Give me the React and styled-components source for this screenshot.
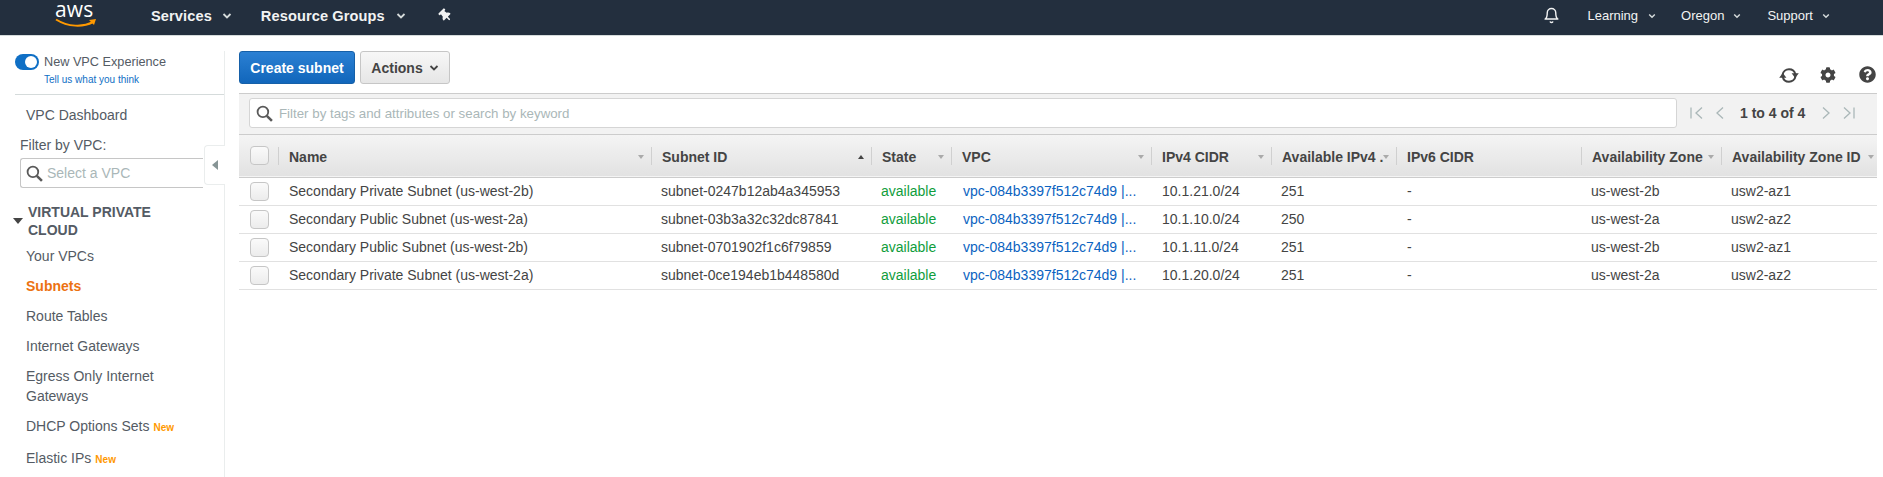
import React from 'react'
import styled, { createGlobalStyle } from 'styled-components'
import { FaCog, FaQuestionCircle, FaThumbtack } from 'react-icons/fa'
import { FiBell } from 'react-icons/fi'

const Global = createGlobalStyle`
  html, body { margin: 0; padding: 0; height: 100%; overflow: hidden; background: #fff; }
  body { font-family: "Liberation Sans", Arial, sans-serif; color: #444; }
  #root { height: 100%; }
`

const Page = styled.div`
  height: 477px;
  display: flex;
  flex-direction: column;
  overflow: hidden;
`

const TopNav = styled.header`
  flex: none;
  height: 31px;
  padding-bottom: 4px;
  background: #232f3e;
  border-bottom: 1px solid #d5dbdb;
  display: flex;
  align-items: center;
  color: #fff;
`

const LogoBox = styled.div`
  width: 151px;
  flex: none;
  padding-left: 55px;
  box-sizing: border-box;
  align-self: flex-start;
`

const LogoText = styled.span`
  display: block;
  font-family: "Open Sans", sans-serif;
  font-size: 21px;
  line-height: 18px;
  letter-spacing: 0.2px;
`

const Smile = styled.svg`
  display: block;
  width: 42px;
  height: 11px;
`

const NavItem = styled.span`
  font-size: ${p => (p.$small ? 13 : 14.6)}px;
  font-weight: ${p => (p.$small ? 400 : 700)};
  letter-spacing: ${p => (p.$small ? 0 : 0.1)}px;
  margin-right: ${p => p.$gap}px;
  color: #f2f3f3;
  display: inline-flex;
  align-items: center;
`

const Pin = styled(FaThumbtack)`
  font-size: 13px;
  transform: rotate(-45deg);
  color: #f2f3f3;
`

const Spacer = styled.div`
  flex: 1;
`

const Body = styled.div`
  flex: 1;
  display: flex;
  padding-top: 15px;
  min-height: 0;
`

const Sidebar = styled.aside`
  width: 224px;
  flex: none;
  border-right: 1px solid #eaeded;
  position: relative;
`

const ToggleRow = styled.div`
  margin-left: 15px;
  height: 43px;
  border-bottom: 1px solid #d5dbdb;
  display: flex;
  gap: 5px;
`

const Toggle = styled.span`
  width: 24px;
  height: 16px;
  margin-top: 3px;
  border-radius: 8px;
  background: #0f6fc5;
  flex: none;
  display: flex;
  justify-content: flex-end;
  align-items: center;
  padding-right: 2px;
  box-sizing: border-box;

  &::after {
    content: '';
    width: 12px;
    height: 12px;
    border-radius: 50%;
    background: #fff;
  }
`

const ToggleLabel = styled.div`
  font-size: 12.7px;
  line-height: 16px;
  color: #545b64;
  margin-top: 3px;
`

const Feedback = styled.div`
  font-size: 10px;
  line-height: 12px;
  margin-top: 4px;
  color: #0f6fc5;
`

const SideLink = styled.div`
  font-size: 14px;
  line-height: 20px;
  color: ${p => (p.$active ? '#ec7211' : '#545b64')};
  font-weight: ${p => (p.$active ? 700 : 400)};
  margin: ${p => p.$mt ?? 10}px 20px 0 26px;
`

const NewTag = styled.span`
  font-size: 10px;
  font-weight: 700;
  color: #ff9900;
  margin-left: 4px;
`

const FilterLabel = styled.div`
  font-size: 14px;
  line-height: 20px;
  margin: 10px 0 3px 20px;
  color: #545b64;
`

const VpcSelect = styled.div`
  margin-left: 20px;
  width: 183px;
  height: 30px;
  box-sizing: border-box;
  border: 1px solid #c6c6c6;
  border-right: 0;
  border-radius: 3px 0 0 3px;
  display: flex;
  align-items: center;
  gap: 4px;
  padding-left: 5px;
  font-size: 14px;
  color: #aab7b8;
`

const Collapse = styled.div`
  position: absolute;
  left: 204px;
  top: 94px;
  width: 21px;
  height: 40px;
  box-sizing: border-box;
  background: #fff;
  border: 1px solid #eaeded;
  border-right: 0;
  border-radius: 4px 0 0 4px;
  display: flex;
  align-items: center;
  justify-content: center;
`

const CollapseArrow = styled.span`
  border-style: solid;
  border-width: 5.5px 6px 5.5px 0;
  border-color: transparent #879596 transparent transparent;
`

const SectionHead = styled.div`
  display: flex;
  align-items: center;
  gap: 5px;
  margin: 15px 20px 0 13px;
  font-size: 14px;
  line-height: 18px;
  font-weight: 700;
  color: #545b64;
`

const SectionCaret = styled.span`
  flex: none;
  border-style: solid;
  border-width: 6px 5px 0 5px;
  border-color: #444 transparent transparent transparent;
`

const Main = styled.main`
  flex: 1;
  min-width: 0;
  padding: 0 6px 0 14px;
`

const ActionBar = styled.div`
  display: flex;
  align-items: flex-start;
  gap: 5px;
  height: 42px;
`

const Button = styled.button`
  height: 33px;
  box-sizing: border-box;
  padding: 0;
  width: ${p => p.$w}px;
  border-radius: 3px;
  font-family: inherit;
  font-size: 14px;
  font-weight: 700;
  display: inline-flex;
  align-items: center;
  justify-content: center;
  gap: 6px;
  border: 1px solid ${p => (p.$primary ? '#1660a8' : '#c6c6c6')};
  color: ${p => (p.$primary ? '#fff' : '#444')};
  background: ${p => (p.$primary
    ? 'linear-gradient(#2b80d3, #1166bb)'
    : 'linear-gradient(#f7f7f7, #e6e6e6)')};
`

const ToolIcons = styled.div`
  margin-left: auto;
  display: flex;
  align-items: center;
  padding-top: 15px;
  color: #444;
  font-size: 17px;
`

const RefreshIcon = styled.svg`
  width: 20px;
  height: 15px;
  margin: 2px 21px 0 0;
`

const GearIcon = styled(FaCog)`
  font-size: 16px;
  margin-right: 23px;
`

const Help = styled(FaQuestionCircle)`
  font-size: 17px;
  margin-right: 1px;
`

const FilterBar = styled.div`
  height: 42px;
  box-sizing: border-box;
  background: #f2f2f2;
  border-top: 1px solid #ccc;
  border-bottom: 1px solid #ccc;
  padding: 4px 0 0 10px;
  display: flex;
`

const SearchBox = styled.div`
  width: 1428px;
  height: 30px;
  box-sizing: border-box;
  background: #fff;
  border: 1px solid #d5d5d5;
  border-radius: 3px;
  display: flex;
  align-items: center;
  gap: 6px;
  padding-left: 6px;
  font-size: 13.3px;
  color: #aab7b8;
`

const Pager = styled.div`
  display: flex;
  align-items: center;
  height: 30px;
  padding-left: 12px;
  font-size: 14px;
  font-weight: 700;
  color: #444;
`

const PageText = styled.span`
  margin: 0 14px 0 13px;
`

const PageIcon = styled.svg`
  width: 14px;
  height: 14px;
  flex: none;
  margin-right: ${p => p.$mr ?? 0}px;
  fill: none;
  stroke: #aab7b8;
  stroke-width: 1.3;
`

const Table = styled.table`
  width: 1638px;
  table-layout: fixed;
  border-collapse: collapse;
  font-size: 14px;
`

const HeadRow = styled.tr`
  height: 42px;
  background: linear-gradient(#f4f4f4, #e2e2e2);
  border-bottom: 1px solid #ccc;
`

const Th = styled.th`
  position: relative;
  padding: ${p => (p.$first ? 0 : '2px 0 0 11px')};
  text-align: left;
  font-size: 14px;
  font-weight: 700;
  color: #444;
  white-space: nowrap;
  overflow: hidden;

  &::before {
    content: '';
    position: absolute;
    left: 0;
    top: 12px;
    bottom: 12px;
    width: 1px;
    background: #d0d0d0;
    display: ${p => (p.$first ? 'none' : 'block')};
  }
`

const SortMark = styled.span`
  position: absolute;
  right: ${p => p.$right ?? 7}px;
  top: 20px;
  border-style: solid;
  border-width: ${p => (p.$up ? '0 3.5px 4px 3.5px' : '4px 3.5px 0 3.5px')};
  border-color: ${p => (p.$up
    ? 'transparent transparent #444 transparent'
    : '#aaa transparent transparent transparent')};
`

const Row = styled.tr`
  height: 28px;
  border-bottom: 1px solid #e1e1e1;
`

const Td = styled.td`
  padding: 0 0 0 ${p => p.$pad ?? 10}px;
  color: ${p => p.$color ?? '#444'};
  white-space: nowrap;
  overflow: hidden;
`

const CheckBox = styled.span`
  display: block;
  width: 19px;
  height: 19px;
  box-sizing: border-box;
  margin-left: 11px;
  border: 1px solid #c6c6c6;
  border-radius: 4px;
  background: linear-gradient(#fafafa, #ececec);
`

const Search = () => (
  <svg width="17" height="17" viewBox="0 0 16 16" fill="none" stroke="#5a5a5a" style={{ flex: 'none' }}>
    <circle cx="6.5" cy="6.5" r="5" strokeWidth="1.7" />
    <path d="M10.2 10.2 15 15" strokeWidth="2.4" />
  </svg>
)

const Chevron = ({ stroke = '#d5dbdb', w = 10 }) => (
  <svg width={w} height="6" viewBox="0 0 10 6" fill="none" stroke={stroke} strokeWidth="1.8">
    <path d="M1.5 1 5 4.5 8.5 1" />
  </svg>
)

const columns = [
  { w: 39 },
  { w: 373, label: 'Name' },
  { w: 220, label: 'Subnet ID', up: true },
  { w: 80, label: 'State' },
  { w: 200, label: 'VPC' },
  { w: 120, label: 'IPv4 CIDR' },
  { w: 125, label: 'Available IPv4 .' },
  { w: 185, label: 'IPv6 CIDR', noSort: true },
  { w: 140, label: 'Availability Zone' },
  { w: 156, label: 'Availability Zone ID', right: 3 },
]

const rows = [
  ['Secondary Private Subnet (us-west-2b)', 'subnet-0247b12ab4a345953', '10.1.21.0/24', '251', 'us-west-2b', 'usw2-az1'],
  ['Secondary Public Subnet (us-west-2a)', 'subnet-03b3a32c32dc87841', '10.1.10.0/24', '250', 'us-west-2a', 'usw2-az2'],
  ['Secondary Public Subnet (us-west-2b)', 'subnet-0701902f1c6f79859', '10.1.11.0/24', '251', 'us-west-2b', 'usw2-az1'],
  ['Secondary Private Subnet (us-west-2a)', 'subnet-0ce194eb1b448580d', '10.1.20.0/24', '251', 'us-west-2a', 'usw2-az2'],
]

export default function App() {
  return (
    <Page>
      <Global />
      <TopNav>
        <LogoBox>
          <LogoText>aws</LogoText>
          <Smile viewBox="0 0 42 11">
            <path d="M1 1.5C13 9 28 9.5 38 4" fill="none" stroke="#f90" strokeWidth="2" />
            <path d="M34 2 41 1 39 7Z" fill="#f90" />
          </Smile>
        </LogoBox>
        <NavItem $gap={10}>Services</NavItem>
        <NavItem $gap={29}><Chevron /></NavItem>
        <NavItem $gap={11}>Resource Groups</NavItem>
        <NavItem $gap={33}><Chevron /></NavItem>
        <Pin />
        <Spacer />
        <NavItem $gap={27}><FiBell size={17} /></NavItem>
        <NavItem $small $gap={10}>Learning</NavItem>
        <NavItem $gap={25}><Chevron w={8} /></NavItem>
        <NavItem $small $gap={9}>Oregon</NavItem>
        <NavItem $gap={26}><Chevron w={8} /></NavItem>
        <NavItem $small $gap={9}>Support</NavItem>
        <NavItem $gap={53}><Chevron w={8} /></NavItem>
      </TopNav>
      <Body>
        <Sidebar>
          <ToggleRow>
            <Toggle />
            <div>
              <ToggleLabel>New VPC Experience</ToggleLabel>
              <Feedback>Tell us what you think</Feedback>
            </div>
          </ToggleRow>
          <SideLink>VPC Dashboard</SideLink>
          <FilterLabel>Filter by VPC:</FilterLabel>
          <VpcSelect><Search />Select a VPC</VpcSelect>
          <Collapse><CollapseArrow /></Collapse>
          <SectionHead>
            <SectionCaret />
            <span>VIRTUAL PRIVATE CLOUD</span>
          </SectionHead>
          <SideLink $mt={7}>Your VPCs</SideLink>
          <SideLink $active>Subnets</SideLink>
          <SideLink>Route Tables</SideLink>
          <SideLink>Internet Gateways</SideLink>
          <SideLink>Egress Only Internet Gateways</SideLink>
          <SideLink>DHCP Options Sets<NewTag>New</NewTag></SideLink>
          <SideLink>Elastic IPs<NewTag>New</NewTag></SideLink>
        </Sidebar>
        <Main>
          <ActionBar>
            <Button $primary $w={116}>Create subnet</Button>
            <Button $w={90}>Actions<Chevron stroke="#444" /></Button>
            <ToolIcons>
              <RefreshIcon viewBox="0 0 20 15">
                <path d="M3.5 7C4 3.2 7 1.2 10 1.2S15.6 3 16.3 6.2M16.5 8C16 11.8 13 13.8 10 13.8S4.4 12 3.7 8.8" fill="none" stroke="#444" strokeWidth="2" />
                <path d="M12.6 5.2h7.2L16.2 10ZM7.4 9.8H.2L3.8 5Z" fill="#444" />
              </RefreshIcon>
              <GearIcon />
              <Help />
            </ToolIcons>
          </ActionBar>
          <FilterBar>
            <SearchBox>
              <Search />
              Filter by tags and attributes or search by keyword
            </SearchBox>
            <Pager>
              <PageIcon viewBox="0 0 14 14" $mr={10}><path d="M2 1.5v11M13 1.5 7 7l6 5.5" /></PageIcon>
              <PageIcon viewBox="0 0 14 14"><path d="M10 1.5 4 7l6 5.5" /></PageIcon>
              <PageText>1 to 4 of 4</PageText>
              <PageIcon viewBox="0 0 14 14" $mr={8}><path d="M4 1.5 10 7l-6 5.5" /></PageIcon>
              <PageIcon viewBox="0 0 14 14"><path d="M13 1.5v11M3 1.5 9 7l-6 5.5" /></PageIcon>
            </Pager>
          </FilterBar>
          <Table>
            <colgroup>
              {columns.map((c, i) => <col key={i} width={c.w} />)}
            </colgroup>
            <thead>
              <HeadRow>
                <Th $first><CheckBox /></Th>
                {columns.slice(1).map(c => (
                  <Th key={c.label}>
                    {c.label}
                    {!c.noSort && <SortMark $up={c.up} $right={c.right} />}
                  </Th>
                ))}
              </HeadRow>
            </thead>
            <tbody>
              {rows.map(r => (
                <Row key={r[1]}>
                  <Td $pad={0}><CheckBox /></Td>
                  <Td $pad={11}>{r[0]}</Td>
                  <Td>{r[1]}</Td>
                  <Td $color="#0f9d3c">available</Td>
                  <Td $pad={12} $color="#0b63c1">vpc-084b3397f512c74d9 |...</Td>
                  <Td $pad={11}>{r[2]}</Td>
                  <Td>{r[3]}</Td>
                  <Td $pad={11}>-</Td>
                  <Td>{r[4]}</Td>
                  <Td>{r[5]}</Td>
                </Row>
              ))}
            </tbody>
          </Table>
        </Main>
      </Body>
    </Page>
  )
}
